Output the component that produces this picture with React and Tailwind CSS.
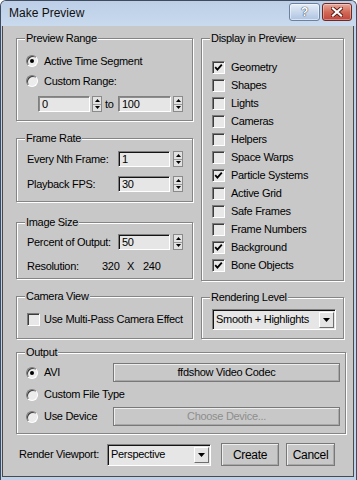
import React from "react";

function Group({ label, className = "", children }) {
  return (
    <div className={`relative border border-[#858585] shadow-[inset_1px_1px_0_#fff,1px_1px_0_#fff] ${className}`}>
      <span className="absolute left-[8px] top-[-8px] h-[14px] leading-[14px] px-[1px] bg-[#c8c8c8] whitespace-nowrap">{label}</span>
      {children}
    </div>
  );
}

function Sunken({ className = "", dim, children }) {
  return (
    <div className={`border border-t-[#808080] border-l-[#808080] border-r-white border-b-white ${dim ? "shadow-[inset_1px_1px_0_#8c8c8c]" : "shadow-[inset_1px_1px_0_#141414]"} ${className}`}>
      {children}
    </div>
  );
}

function Input({ value, className = "", dim }) {
  return (
    <Sunken dim={dim} className={`h-[16px] bg-[#e6e6e6] flex items-center pl-[3px] leading-none ${className}`}>
      {value}
    </Sunken>
  );
}

function Spinner({ className = "" }) {
  return (
    <div className={`w-[10px] h-[16px] flex flex-col border border-[#8a8a8a] bg-[#e2e2e2] ${className}`}>
      <div className="flex-1 flex items-center justify-center border-b border-[#9a9a9a]">
        <svg width="5" height="3" viewBox="0 0 5 3"><path d="M2.5 0 L5 3 L0 3 Z" fill="#000" /></svg>
      </div>
      <div className="flex-1 flex items-center justify-center">
        <svg width="5" height="3" viewBox="0 0 5 3"><path d="M0 0 L5 0 L2.5 3 Z" fill="#000" /></svg>
      </div>
    </div>
  );
}

function Radio({ on }) {
  return (
    <div className="w-[12px] h-[12px] shrink-0 rounded-full border border-t-[#7a7a7a] border-l-[#7a7a7a] border-r-white border-b-white shadow-[inset_1px_1px_0_#3c3c3c] bg-[#ececec] flex items-center justify-center">
      {on && <div className="w-[4px] h-[4px] rounded-full bg-black" />}
    </div>
  );
}

function Check({ on }) {
  return (
    <div className="w-[13px] h-[13px] shrink-0 border border-t-[#7a7a7a] border-l-[#7a7a7a] border-r-white border-b-white shadow-[inset_1px_1px_0_#3c3c3c] bg-[#e8e8e8] flex items-center justify-center">
      {on && (
        <svg width="9" height="9" viewBox="0 0 9 9">
          <path d="M1.2 4.2 L3.4 6.6 L7.8 1.6" stroke="#000" strokeWidth="1.8" fill="none" />
        </svg>
      )}
    </div>
  );
}

function Btn({ className = "", disabled, children }) {
  return (
    <div className={`flex items-center justify-center whitespace-nowrap border border-[#787878] shadow-[inset_1px_1px_0_#eeeeee,inset_-1px_-1px_0_#a8a8a8] bg-[#c8c8c8] ${disabled ? "text-[#8e8e8e]" : "text-black"} ${className}`}>
      {children}
    </div>
  );
}

function Dropdown({ className = "", text }) {
  return (
    <Sunken className={`flex items-center bg-[#e6e6e6] ${className}`}>
      <span className="flex-1 pl-[3px] whitespace-nowrap">{text}</span>
      <div className="w-[15px] h-[16px] mr-[1px] flex items-center justify-center bg-[#e4e4e4] border border-t-white border-l-white border-r-[#6e6e6e] border-b-[#6e6e6e]">
        <svg width="7" height="4" viewBox="0 0 7 4"><path d="M0 0H7L3.5 4Z" fill="#000" /></svg>
      </div>
    </Sunken>
  );
}

const displayItems = [
  ["Geometry", true],
  ["Shapes", false],
  ["Lights", false],
  ["Cameras", false],
  ["Helpers", false],
  ["Space Warps", false],
  ["Particle Systems", true],
  ["Active Grid", false],
  ["Safe Frames", false],
  ["Frame Numbers", false],
  ["Background", true],
  ["Bone Objects", true],
];

export default function App() {
  return (
    <div className="w-[357px] h-[480px] flex flex-col overflow-hidden border-t border-l border-r border-[#3f4b5c] rounded-t-[6px] bg-[#bdd2ea] font-['Liberation_Sans',Arial,sans-serif] text-[11px] tracking-[-0.3px] text-black">
      {/* Title bar */}
      <div className="h-[25px] shrink-0 flex items-start bg-gradient-to-b from-[#bccfe7] to-[#c9daee]">
        <span className="pl-[8px] pt-[5px] text-[12px] tracking-normal leading-[15px] text-[#101010]">Make Preview</span>
        <div className="ml-auto mr-[4px] mt-[2px] flex gap-[2px]">
          <div className="w-[31px] h-[18px] rounded-[3px] border border-[#6c80a0] bg-gradient-to-b from-[#e6eef8] via-[#c9d8ec] to-[#aec4e2] flex items-center justify-center shadow-[inset_0_0_0_1px_rgba(255,255,255,0.5)]">
            <span className="text-[12px] font-bold leading-none text-white [text-shadow:0_0_1px_#22344f,0_0_1px_#22344f]">?</span>
          </div>
          <div className="w-[30px] h-[18px] rounded-[3px] border border-[#6e2a22] bg-gradient-to-b from-[#e8a89b] via-[#d26a58] to-[#c0443a] flex items-center justify-center shadow-[inset_0_0_0_1px_rgba(255,255,255,0.35)]">
            <svg width="12" height="10" viewBox="0 0 12 10">
              <path d="M2 1.5 L10 8.5 M10 1.5 L2 8.5" stroke="#5a1b15" strokeWidth="4" strokeLinecap="square" />
              <path d="M2 1.5 L10 8.5 M10 1.5 L2 8.5" stroke="#ffffff" strokeWidth="2.2" strokeLinecap="square" />
            </svg>
          </div>
        </div>
      </div>

      {/* Content */}
      <div className="flex-1 ml-[1px] mr-[2px] mb-[3px] border-l border-r border-b border-[#4a4a4a] bg-[#c8c8c8] pl-[13px] pt-[12px] flex flex-col">
        <div className="flex gap-[8px]">
          {/* Left column */}
          <div className="w-[177px] flex flex-col">
            <Group label="Preview Range" className="h-[83px] pt-[12px]">
              <div className="h-[20px] flex items-center pl-[9px]">
                <Radio on />
                <span className="ml-[6px]">Active Time Segment</span>
              </div>
              <div className="h-[20px] flex items-center pl-[9px]">
                <Radio />
                <span className="ml-[6px]">Custom Range:</span>
              </div>
              <div className="mt-[5px] h-[16px] flex items-center pl-[21px]">
                <Input dim value="0" className="w-[52px]" />
                <Spinner className="ml-[2px]" />
                <span className="ml-[3px] w-[13px]">to</span>
                <Input dim value="100" className="w-[53px]" />
                <Spinner className="ml-[2px]" />
              </div>
            </Group>

            <Group label="Frame Rate" className="mt-[17px] h-[64px] pt-[12px]">
              <div className="h-[16px] flex items-center pl-[10px]">
                <span className="w-[91px]">Every Nth Frame:</span>
                <Input value="1" className="w-[52px]" />
                <Spinner className="ml-[3px]" />
              </div>
              <div className="mt-[9px] h-[16px] flex items-center pl-[10px]">
                <span className="w-[91px]">Playback FPS:</span>
                <Input value="30" className="w-[52px]" />
                <Spinner className="ml-[3px]" />
              </div>
            </Group>

            <Group label="Image Size" className="mt-[20px] h-[57px] pt-[11px]">
              <div className="h-[16px] flex items-center pl-[10px]">
                <span className="w-[91px]">Percent of Output:</span>
                <Input value="50" className="w-[52px]" />
                <Spinner className="ml-[3px]" />
              </div>
              <div className="mt-[8px] h-[16px] flex items-center pl-[10px]">
                <span className="w-[75px]">Resolution:</span>
                <span className="w-[25px]">320</span>
                <span className="w-[16px]">X</span>
                <span>240</span>
              </div>
            </Group>

            <Group label="Camera View" className="mt-[17px] h-[43px] pt-[15px]">
              <div className="h-[14px] flex items-center pl-[10px]">
                <Check />
                <span className="ml-[4px] whitespace-nowrap">Use Multi-Pass Camera Effect</span>
              </div>
            </Group>
          </div>

          {/* Right column */}
          <div className="w-[143px] flex flex-col">
            <Group label="Display in Preview" className="h-[243px] pt-[19px]">
              {displayItems.map(([name, on]) => (
                <div key={name} className="h-[18px] flex items-center pl-[10px]">
                  <Check on={on} />
                  <span className="ml-[6px]">{name}</span>
                </div>
              ))}
            </Group>

            <Group label="Rendering Level" className="mt-[16px] h-[42px] pt-[11px] pl-[10px]">
              <Dropdown text="Smooth + Highlights" className="w-[124px] h-[21px]" />
            </Group>
          </div>
        </div>

        {/* Output */}
        <Group label="Output" className="mt-[13px] w-[330px] h-[82px] pt-[10px] pr-[5px] flex flex-col gap-[3px]">
          <div className="h-[19px] flex items-center pl-[9px]">
            <div className="w-[87px] flex items-center">
              <Radio on />
              <span className="ml-[6px]">AVI</span>
            </div>
            <Btn className="flex-1 h-[19px]">ffdshow Video Codec</Btn>
          </div>
          <div className="h-[19px] flex items-center pl-[9px]">
            <Radio />
            <span className="ml-[6px]">Custom File Type</span>
          </div>
          <div className="h-[19px] flex items-center pl-[9px]">
            <div className="w-[87px] flex items-center">
              <Radio />
              <span className="ml-[6px]">Use Device</span>
            </div>
            <Btn disabled className="flex-1 h-[19px]">Choose Device...</Btn>
          </div>
        </Group>

        {/* Bottom row */}
        <div className="mt-[9px] h-[23px] flex items-center">
          <span className="ml-[3px] w-[88px]">Render Viewport:</span>
          <Dropdown text="Perspective" className="w-[104px] h-[22px]" />
          <Btn className="ml-[10px] w-[58px] h-[23px] text-[12px]">Create</Btn>
          <Btn className="ml-[7px] w-[49px] h-[23px] text-[12px]">Cancel</Btn>
        </div>
      </div>
    </div>
  );
}
